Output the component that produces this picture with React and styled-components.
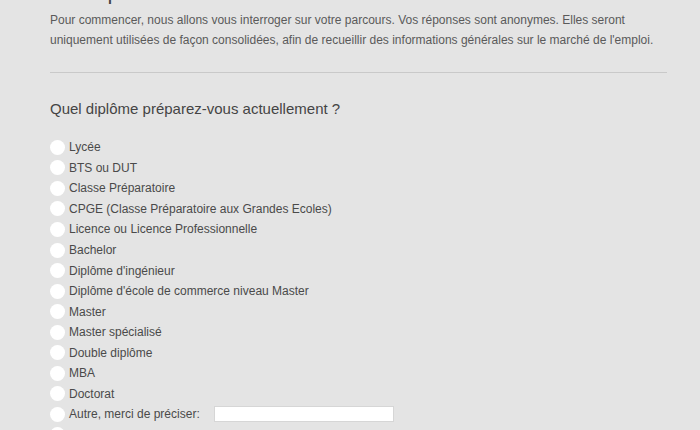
import React from "react";
import styled, { createGlobalStyle } from "styled-components";

const GlobalStyle = createGlobalStyle`
  html, body {
    margin: 0;
    padding: 0;
    background: #e4e4e4;
  }
  body {
    font-family: "Liberation Sans", Arial, Helvetica, sans-serif;
    color: #555;
  }
`;

const Page = styled.div`
  width: 700px;
  height: 430px;
  overflow: hidden;
  background: #e4e4e4;
  padding: 10px 33px 0 50px;
  box-sizing: border-box;
`;

// heading scrolled mostly out of view, only the descenders show at the top edge
const Title = styled.h1`
  margin: -30px 0 6px;
  font-size: 22px;
  font-weight: normal;
  line-height: 24px;
  color: #444;
`;

const Intro = styled.p`
  margin: 0;
  font-size: 12px;
  line-height: 20px;
  color: #5a5a5a;
`;

const Divider = styled.hr`
  border: none;
  border-top: 1px solid #c9c9c9;
  margin: 22px 0 0;
`;

const Question = styled.h2`
  margin: 26px 0 0;
  font-size: 15px;
  font-weight: normal;
  line-height: 20px;
  color: #444;
`;

const Options = styled.div`
  margin-top: 18px;
  display: flex;
  flex-direction: column;
`;

const Option = styled.label`
  display: flex;
  align-items: center;
  height: 20.55px;
  font-size: 12px;
  color: #4a4a4a;
`;

const Radio = styled.span`
  width: 15px;
  height: 15px;
  border-radius: 50%;
  background: #fff;
  margin-right: 4px;
  flex-shrink: 0;
`;

const TextInput = styled.input`
  margin-left: 14px;
  width: 180px;
  height: 16px;
  box-sizing: border-box;
  border: 1px solid #d6d6d6;
  background: #fff;
  padding: 0;
`;

const choices = [
  "Lycée",
  "BTS ou DUT",
  "Classe Préparatoire",
  "CPGE (Classe Préparatoire aux Grandes Ecoles)",
  "Licence ou Licence Professionnelle",
  "Bachelor",
  "Diplôme d'ingénieur",
  "Diplôme d'école de commerce niveau Master",
  "Master",
  "Master spécialisé",
  "Double diplôme",
  "MBA",
  "Doctorat",
];

const App = () => {
  return (
    <Page>
      <GlobalStyle />
      <Title>Votre parcours</Title>
      <Intro>
        Pour commencer, nous allons vous interroger sur votre parcours. Vos réponses sont anonymes. Elles seront
        uniquement utilisées de façon consolidées, afin de recueillir des informations générales sur le marché de l'emploi.
      </Intro>
      <Divider />
      <Question>Quel diplôme préparez-vous actuellement ?</Question>
      <Options>
        {choices.map(c => (
          <Option key={c}>
            <Radio />
            {c}
          </Option>
        ))}
        <Option>
          <Radio />
          Autre, merci de préciser:
          <TextInput type="text" />
        </Option>
        <Option>
          <Radio />
          Aucun
        </Option>
      </Options>
    </Page>
  );
};

export default App;
